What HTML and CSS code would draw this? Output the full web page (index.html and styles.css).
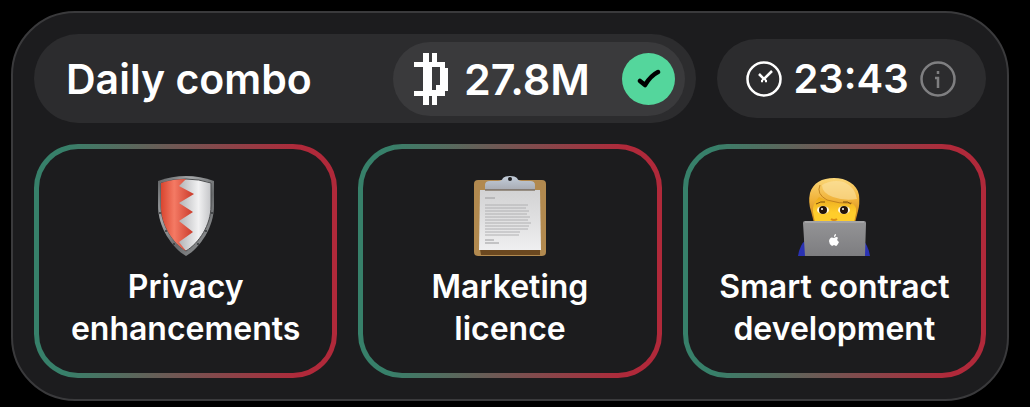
FILE: index.html
```html
<!DOCTYPE html>
<html lang="en">
<head>
    <meta charset="UTF-8">
    <meta name="viewport" content="width=device-width, initial-scale=1.0">
    <title>Daily combo</title>
    <link rel="stylesheet" href="styles.css">
</head>
<body>
    <main class="panel">
        <header class="header">
            <div class="combo">
                <h1 class="title">Daily combo</h1>
                <div class="reward">
                    <svg class="coin" viewBox="0 0 34 52" fill="#fff" shape-rendering="crispEdges" aria-hidden="true">
                        <path d="M9 0h6v9h3V0h5v9h8v6h3v23h-3v5h-8v9h-5v-9h-3v9H9v-9H0v-5h9V14H0V9h9z"/>
                        <path d="M18 14h8v18h-4v5h-4z" fill="#3a3a3c"/>
                    </svg>
                    <span class="amount">27.8M</span>
                    <span class="check">
                        <svg width="24" height="20" viewBox="0 0 24 20" aria-hidden="true">
                            <path d="M3 12l5 4C11 11 15 6 21 3" fill="none" stroke="#000" stroke-width="4.5" stroke-linecap="round" stroke-linejoin="round"/>
                        </svg>
                    </span>
                </div>
            </div>
            <div class="timer">
                <svg class="round-icon" viewBox="0 0 36 36" fill="none" stroke="#fff" stroke-width="2.5" aria-hidden="true">
                    <circle cx="18" cy="18" r="16.5"/>
                    <path d="M13 13l5 5 8-8M15 20h2M19 20h2M16 18h4"/>
                </svg>
                <time class="time">23:43</time>
                <button class="info" type="button" aria-label="Info">
                    <svg class="round-icon" viewBox="0 0 36 36" fill="none" stroke="#7f7f81" stroke-width="2.5" aria-hidden="true">
                        <circle cx="18" cy="18" r="16.5"/>
                        <path d="M18 10v3M15 17h3v10"/>
                    </svg>
                </button>
            </div>
        </header>

        <section class="cards">
            <article class="card">
                <svg class="card-icon" viewBox="0 0 60 80" aria-hidden="true">
                    <defs>
                        <linearGradient id="steel" x1="0" y1="0" x2="1" y2="1">
                            <stop offset="0" stop-color="#5c5e60"/>
                            <stop offset=".3" stop-color="#a5a7a9"/>
                            <stop offset=".6" stop-color="#67696b"/>
                            <stop offset="1" stop-color="#a2a4a6"/>
                        </linearGradient>
                        <linearGradient id="red">
                            <stop offset="0" stop-color="#d9452f"/>
                            <stop offset=".4" stop-color="#f47a64"/>
                            <stop offset="1" stop-color="#c9392a"/>
                        </linearGradient>
                        <linearGradient id="silver">
                            <stop offset="0" stop-color="#a9aaad"/>
                            <stop offset=".3" stop-color="#a9aaad"/>
                            <stop offset=".75" stop-color="#f1f1f2"/>
                            <stop offset="1" stop-color="#c4c5c8"/>
                        </linearGradient>
                    </defs>
                    <path d="M2 5Q16 0 30 0T58 5V30C58 51 44 72 30 80 16 72 2 51 2 30z" fill="url(#steel)"/>
                    <path d="M5 7Q17 3 30 3T55 7V30C55 49 43 67 30 75 17 67 5 49 5 30z" fill="url(#silver)" stroke="#4b4c4e"/>
                    <path d="M5 7Q17 3 30 3L23 10 38 18 23 27 37 36 23 45 37 56 23 66 30 75C17 67 5 49 5 30z" fill="url(#red)"/>
                    <g fill="#35373a">
                        <circle cx="4" cy="37" r="1"/><circle cx="10" cy="55" r="1"/><circle cx="18" cy="68" r="1"/>
                        <circle cx="56" cy="37" r="1"/><circle cx="50" cy="55" r="1"/><circle cx="42" cy="68" r="1"/>
                    </g>
                </svg>
                <h2 class="card-title">Privacy<br>enhancements</h2>
            </article>
            <article class="card">
                <svg class="card-icon" viewBox="0 0 72 80" aria-hidden="true">
                    <defs>
                        <linearGradient id="paper" x2="0" y2="1">
                            <stop offset="0" stop-color="#d2d2d3"/>
                            <stop offset="1" stop-color="#efeff0"/>
                        </linearGradient>
                        <linearGradient id="clip" x2="0" y2="1">
                            <stop offset="0" stop-color="#c3cedb"/>
                            <stop offset="1" stop-color="#a8abb2"/>
                        </linearGradient>
                    </defs>
                    <rect y="4" width="72" height="76" rx="4" fill="#b1894f"/>
                    <path d="M6 73h60v6H7z" fill="#6b4820"/>
                    <path d="M6 14h60l1 60H5z" fill="url(#paper)"/>
                    <path d="M11 22h10M11 64h9M11 67h14" stroke="#9a9a9c"/>
                    <path d="M11 29h43M11 32h41M11 35h44M11 38h42M11 41h45M11 44h43M11 47h46M11 50h44M11 53h43M11 56h35M11 59h34" stroke="#b0b0b2"/>
                    <path d="M11 14V9q0-4 5-4h8q4 0 5-3 2-2 7-2t7 2q1 3 5 3h8q5 0 5 4v5z" fill="url(#clip)"/>
                    <path d="M11 14h50" stroke="#5c4a35"/>
                    <circle cx="36" cy="3" r="2" fill="#1c1c1e"/>
                </svg>
                <h2 class="card-title">Marketing<br>licence</h2>
            </article>
            <article class="card">
                <svg class="card-icon" viewBox="0 0 72 80" aria-hidden="true">
                    <defs>
                        <linearGradient id="hair" x2="0" y2="1">
                            <stop offset="0" stop-color="#fbd779"/>
                            <stop offset=".5" stop-color="#f0b137"/>
                            <stop offset="1" stop-color="#c07c16"/>
                        </linearGradient>
                        <linearGradient id="face" x2="0" y2="1">
                            <stop offset="0" stop-color="#eba91f"/>
                            <stop offset=".6" stop-color="#ffcd2b"/>
                        </linearGradient>
                        <linearGradient id="lid" x2="0" y2="1">
                            <stop offset="0" stop-color="#949496"/>
                            <stop offset="1" stop-color="#7d7d80"/>
                        </linearGradient>
                    </defs>
                    <path d="M0 80q2-12 8-16h56q6 4 8 16z" fill="#2a32b4"/>
                    <path d="M13 35Q10 26 12 17C15 7 24 2 36 2s23 6 25 17q1 9-1 16l-3 12H16z" fill="url(#hair)"/>
                    <path d="M15 36q-1-8 6-15 11 6 34 7 4 3 3 9l-2 10H17z" fill="url(#face)"/>
                    <path d="M24 9q10-6 22-3 11 5 13 17-13 2-24-2T24 9z" fill="#fbe3a4" opacity=".6"/>
                    <path d="M22 9Q18 18 29 24q12 4 25 3" fill="none" stroke="#b87817" opacity=".8"/>
                    <path d="M18 28q5-3 9-2M45 26q5-1 8 2" fill="none" stroke="#7b4e0d"/>
                    <g fill="#fff8e0"><ellipse cx="25" cy="34" rx="6" ry="4"/><ellipse cx="46" cy="34" rx="6" ry="4"/></g>
                    <g fill="#241409"><circle cx="25" cy="34" r="4"/><circle cx="46" cy="34" r="4"/></g>
                    <g fill="#fff"><circle cx="24" cy="33" r="1"/><circle cx="45" cy="33" r="1"/></g>
                    <path d="M33 43q3 2 6 0" fill="none" stroke="#d88b17" stroke-width="2"/>
                    <path d="M7 45h59q2 0 2 2l-1 33H7L5 47q0-2 2-2z" fill="url(#lid)"/>
                    <path d="M7 46h59" stroke="#b5b5b7"/>
                    <path d="M36 62q3-2 4 0-2 2 1 4-2 4-3 4l-2-1-2 1q-3-2-3-5 1-5 5-3zM36 61q0-3 2-3 0 3-2 3z" fill="#fff"/>
                </svg>
                <h2 class="card-title">Smart contract<br>development</h2>
            </article>
        </section>
    </main>
</body>
</html>
```
FILE: styles.css
```css
* { box-sizing: border-box; }
body { margin: 0; padding: 11px 21px 6px 11px; background: #000; color: #fff; font-family: Inter, "Liberation Sans", sans-serif; }
h1, h2 { margin: 0; }
.panel { padding: 21px; background: #1c1c1e; border: 2px solid #3a3a3c; border-radius: 64px; }

.header { display: flex; align-items: center; gap: 21px; margin-bottom: 21px; }
.combo { flex: 1; display: flex; align-items: center; justify-content: space-between; padding: 8px 11px 7px 32px; background: #2c2c2e; border-radius: 45px; }
.title, .amount, .time { font-size: 41px; font-weight: 600; line-height: 50px; white-space: nowrap; }
.amount { font-size: 43px; }
.time { font-size: 40px; }
.reward { display: flex; align-items: center; width: 292px; padding: 11px 10px 11px 21px; background: #3a3a3c; border-radius: 37px; }
.coin { width: 34px; height: 52px; margin-right: 16px; }
.check { display: flex; align-items: center; justify-content: center; width: 53px; height: 52px; margin-left: auto; background: #54d69c; border-radius: 50%; }
.timer { display: flex; align-items: center; justify-content: space-between; width: 269px; height: 79px; padding: 0 30px 0 29px; background: #2c2c2e; border-radius: 40px; }
.round-icon { display: block; width: 36px; height: 36px; }
.info { padding: 0; border: none; background: none; cursor: pointer; }

.cards { display: grid; grid-template-columns: repeat(3, 1fr); gap: 21px; }
.card { display: flex; flex-direction: column; align-items: center; gap: 10px; padding: 27px 10px 23px; border: 5px solid transparent; border-radius: 44px; background: linear-gradient(#1c1c1e, #1c1c1e) padding-box, linear-gradient(to right, #37806a 10%, #b0293a 88%) border-box; }
.card-icon { height: 80px; }
.card-title { font-size: 32px; font-weight: 600; line-height: 42px; text-align: center; }
```
